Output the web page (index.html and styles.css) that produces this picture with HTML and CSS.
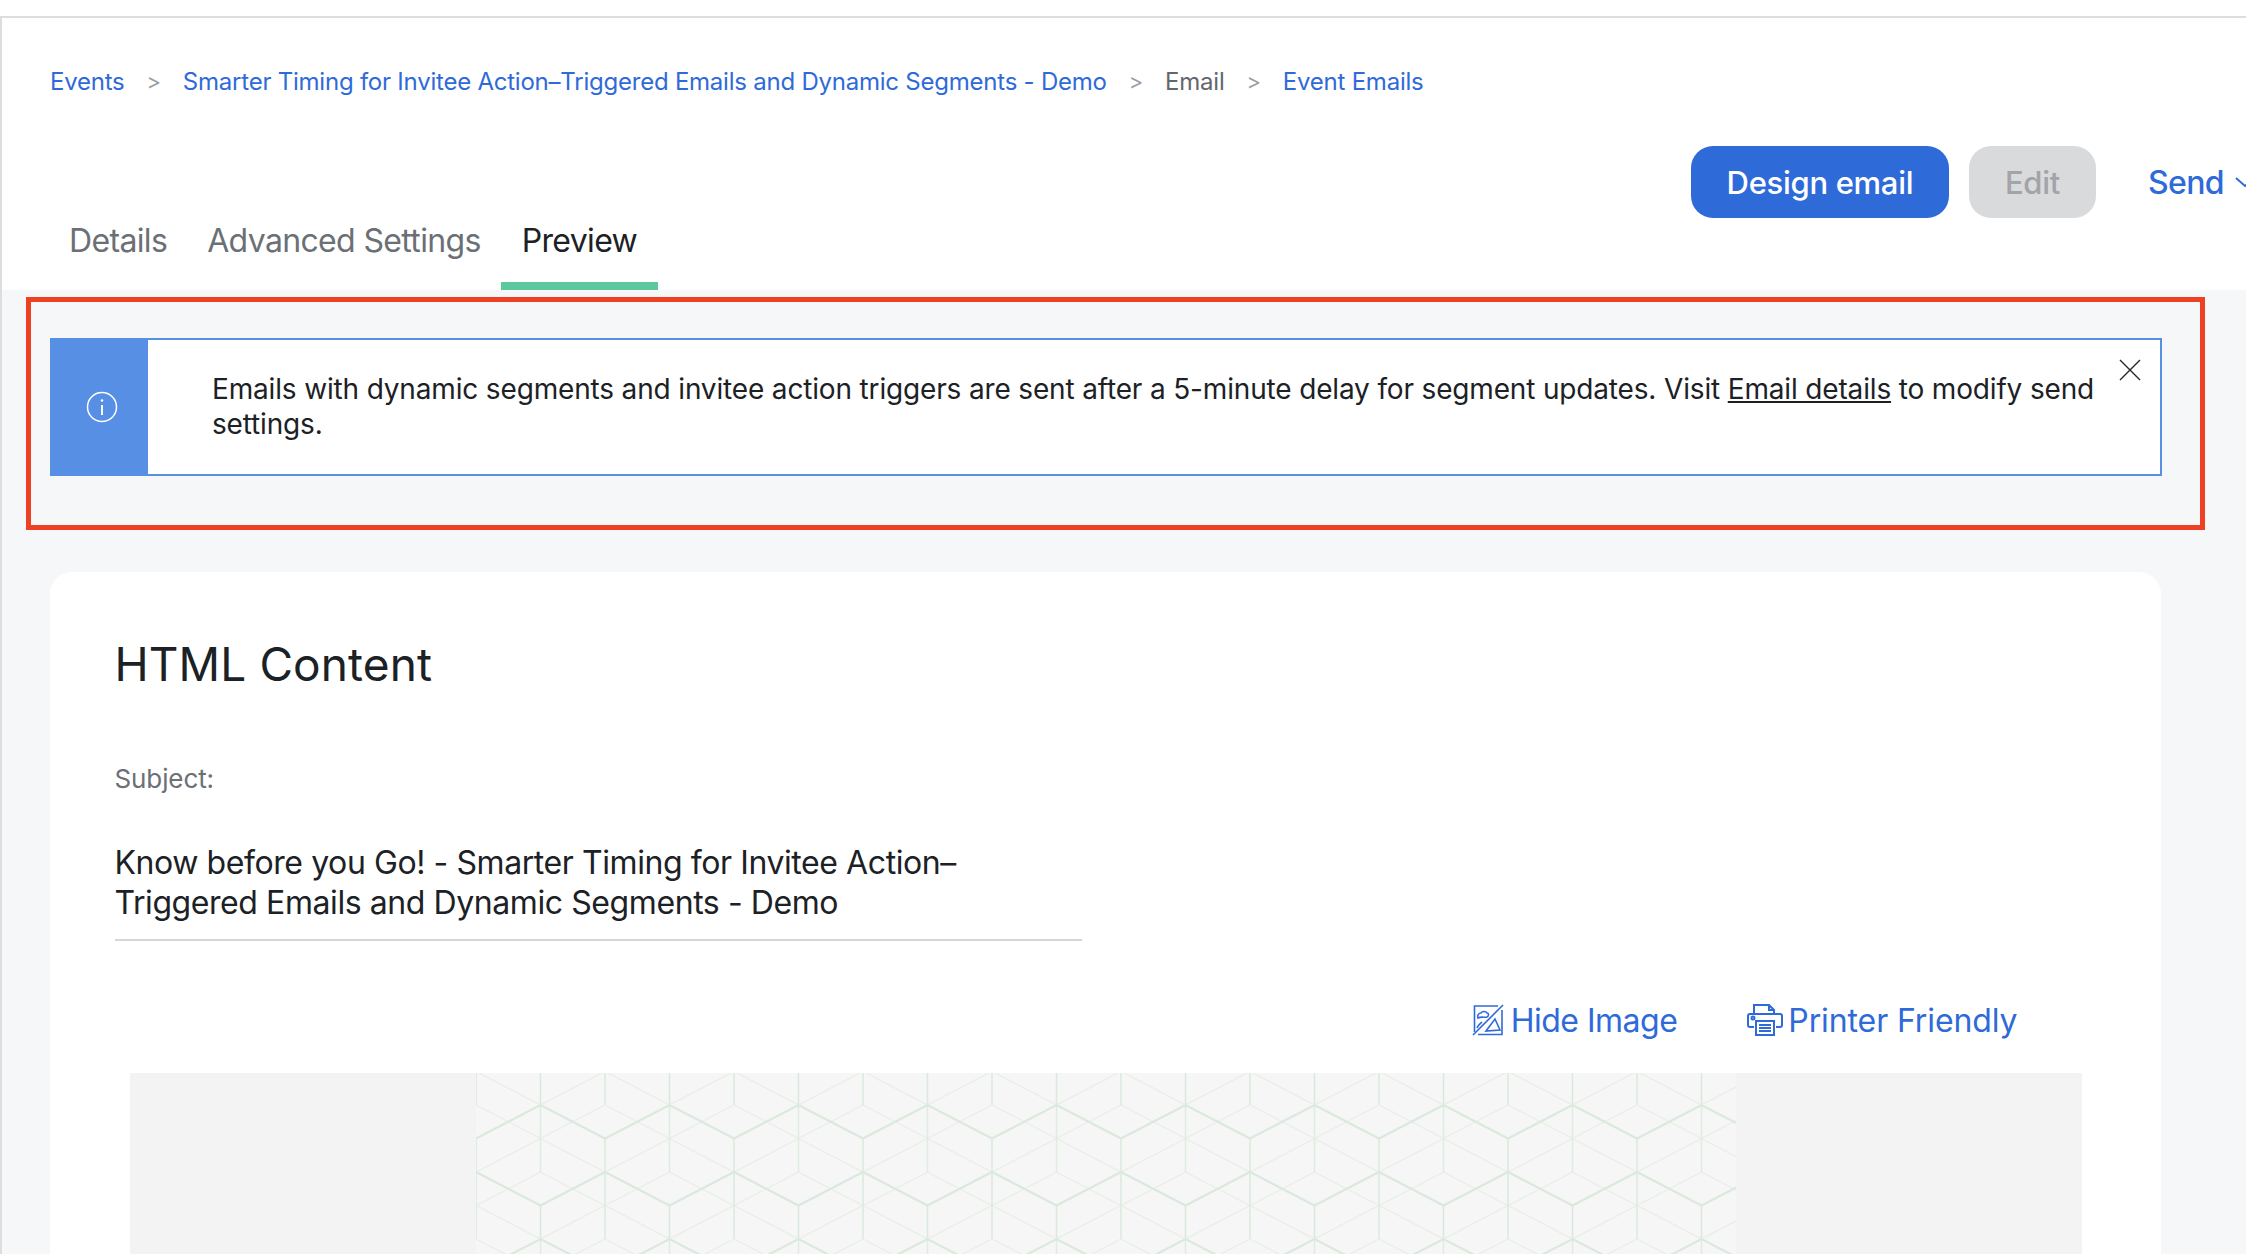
FILE: index.html
```html
<!DOCTYPE html>
<html lang="en">
<head>
  <meta charset="UTF-8" />
  <title>Event Emails - Preview</title>
  <meta name="viewport" content="width=device-width, initial-scale=1" />
  <link rel="stylesheet" href="styles.css">
</head>
<body>
  <div class="page">
    <header class="top">
      <nav class="crumbs">
        <a href="#">Events</a>
        <span class="sep">&gt;</span>
        <a href="#">Smarter Timing for Invitee Action–Triggered Emails and Dynamic Segments - Demo</a>
        <span class="sep">&gt;</span>
        <span class="crumb-plain">Email</span>
        <span class="sep">&gt;</span>
        <a href="#">Event Emails</a>
      </nav>
      <div class="toolbar">
        <div class="tabs">
          <a class="tab" href="#">Details</a>
          <a class="tab" href="#">Advanced Settings</a>
          <a class="tab active" href="#">Preview</a>
        </div>
        <div class="actions">
          <button class="btn primary">Design email</button>
          <button class="btn disabled">Edit</button>
          <a class="send" href="#">Send
            <svg class="chev" width="22" height="12" viewBox="0 0 22 12"><path d="M2 2l9 8 9-8" fill="none" stroke="#2f6ad9" stroke-width="2"/></svg>
          </a>
        </div>
      </div>
    </header>

    <main class="content">
      <div class="highlight">
        <section class="notice">
          <div class="notice-icon">
            <svg width="32" height="32" viewBox="0 0 32 32" fill="none" stroke="#fff">
              <circle cx="16" cy="16" r="14.5" stroke-width="1.5"/>
              <path d="M16 14v10" stroke-width="2"/>
              <circle cx="16" cy="9.5" r="1.3" fill="#fff" stroke="none"/>
            </svg>
          </div>
          <p class="notice-text">Emails with dynamic segments and invitee action triggers are sent after a 5-minute delay for segment updates. Visit <a href="#">Email details</a> to modify send settings.</p>
          <svg class="notice-close" width="24" height="24" viewBox="0 0 24 24"><path d="M2 2l20 20M22 2L2 22" stroke="#22272c" stroke-width="1.4" fill="none"/></svg>
        </section>
      </div>

      <section class="card">
        <h2>HTML Content</h2>
        <div class="label">Subject:</div>
        <div class="subject">Know before you Go! - Smarter Timing for Invitee Action–Triggered Emails and Dynamic Segments - Demo</div>
        <div class="links">
          <a class="hide-link" href="#">
            <svg width="32" height="32" viewBox="0 0 32 32" fill="none" stroke="#2f6ad9" stroke-width="1.6">
              <path d="M26 2H2.5v26M30 6v24.5H6"/>
              <path d="M1 31L31 1"/>
              <path d="M6 14c-1-3 1-5 3-5 1-2 5-2 6 0 2 0 2 3 0 4-3 1-5-1-9 1z"/>
              <path d="M5 24c1-3 3-4 5-6M14 27l9-12 5 11z"/>
            </svg>
            Hide Image
          </a>
          <a class="print-link" href="#">
            <svg class="printer" width="36" height="34" viewBox="0 0 36 34" fill="none" stroke="#2f6ad9" stroke-width="2">
              <path d="M7 11V2h15l5 5v4"/>
              <path d="M22 2v5h5"/>
              <path d="M7 24H3a2 2 0 0 1-2-2V13a2 2 0 0 1 2-2h30a2 2 0 0 1 2 2v9a2 2 0 0 1-2 2h-4"/>
              <circle cx="6" cy="15" r="1.5"/>
              <path d="M9 18h18v14H9zM12 22h12M12 25h12M12 28h12"/>
            </svg>
            Printer Friendly
          </a>
        </div>
        <div class="email-frame">
          <svg class="email-bg" width="1260" height="181">
            <defs>
              <pattern id="cubes" x="0" y="32" width="129" height="134" patternUnits="userSpaceOnUse">
                <g fill="none" stroke="#eaefea" stroke-width="1.5">
                  <path d="M0 0L64.5 33.5L129 0M0 67L64.5 33.5L129 67M0 100.5L64.5 67L129 100.5M0 100.5L64.5 134L129 100.5"/>
                  <path d="M64.5 0V67" stroke="#dfece0"/>
                </g>
                <g fill="none" stroke="#dae9db" stroke-width="1.5">
                  <path d="M64.5 100.5V134M0 33.5V134M129 33.5V134"/>
                </g>
                <g fill="none" stroke="#dae9db" stroke-width="2">
                  <path d="M0 33.5L64.5 0L129 33.5M0 67L64.5 100.5L129 67"/>
                </g>
              </pattern>
            </defs>
            <rect width="1260" height="181" fill="#f5f6f5"/>
            <rect width="1260" height="181" fill="url(#cubes)"/>
          </svg>
        </div>
      </section>
    </main>
  </div>
</body>
</html>
```

FILE: styles.css
```css
html, body { margin: 0; height: 1254px; overflow: hidden; background: #fff; }
body { font-family: Inter, "Noto Sans", sans-serif; color: #1c2126; }
a { color: #2f6ad9; text-decoration: none; }

.page { margin-top: 16px; border-top: 2px solid #dddddd; border-left: 2px solid #dddddd; width: 2300px; height: 1236px; background: #f6f7f9; }

.top { background: #fff; height: 272px; box-sizing: border-box; padding: 51px 0 0 48px; display: flex; flex-direction: column; }
.crumbs { display: flex; align-items: center; height: 24px; font-size: 24px; letter-spacing: -0.23px; }
.sep { color: #9a9da2; margin: 0 22px; font-size: 22px; }
.crumb-plain { color: #63676c; }

.toolbar { display: flex; justify-content: space-between; align-items: flex-end; width: 2206px; margin-top: auto; }
.tabs { display: flex; }
.tab { color: #6b7076; font-size: 32px; letter-spacing: -0.65px; padding: 0 20px; height: 68px; line-height: 38px; box-sizing: border-box; }
.tab:first-child { margin-left: -1px; }
.tab.active { color: #1c2126; border-bottom: 8px solid #5cc8a0; padding: 0 21px; }

.actions { display: flex; align-items: center; gap: 20px; margin-bottom: 72px; flex-shrink: 0; }
.btn { font-family: inherit; font-size: 31px; font-weight: 500; letter-spacing: -0.3px; height: 72px; border: none; border-radius: 22px; padding: 0; }
.btn.primary { background: #2f6ad9; color: #fff; width: 258px; }
.btn.disabled { background: #d9dadc; color: #a2a4a8; width: 127px; }
.send { font-size: 32px; font-weight: 500; letter-spacing: -0.6px; margin-left: 32px; display: flex; align-items: center; gap: 10px; }

.content { padding-top: 7px; }
.highlight { margin-left: 24px; width: 2179px; height: 233px; box-sizing: border-box; border: 5px solid #ee4023; padding: 36px 38px 0 19px; }
.notice { position: relative; display: flex; height: 138px; box-sizing: border-box; border: 2px solid #5790e3; background: #fff; }
.notice-icon { width: 98px; flex-shrink: 0; box-sizing: border-box; padding-left: 6px; margin: -2px 0 -2px -2px; background: #568fe3; display: flex; align-items: center; justify-content: center; }
.notice-text { margin: 0; padding: 32px 40px 0 64px; font-size: 28px; line-height: 34.5px; letter-spacing: -0.16px; color: #1c2126; }
.notice-text a { color: inherit; text-decoration: underline; }
.notice-close { position: absolute; top: 18px; right: 18px; }

.card { margin: 42px 0 0 48px; width: 2111px; height: 700px; box-sizing: border-box; background: #fff; border-radius: 22px; padding: 64px 0 0 64.5px; }
.card h2 { margin: 0; font-size: 46px; font-weight: 400; line-height: 56px; letter-spacing: 0.1px; }
.label { margin-top: 72px; font-size: 26px; letter-spacing: -0.1px; line-height: 30px; color: #6b7076; }
.subject { margin-top: 49px; width: 967px; box-sizing: border-box; padding-bottom: 16px; border-bottom: 2px solid #d6d6d6; font-size: 32px; letter-spacing: -0.42px; line-height: 40px; }
.links { display: flex; justify-content: flex-end; gap: 70px; width: 1903px; margin-top: 59px; height: 40px; }
.links a { display: flex; align-items: center; gap: 7px; font-size: 32px; }
.links .hide-link { letter-spacing: -0.5px; }
.links .print-link { letter-spacing: -0.1px; }
.printer { margin-right: -2px; }
.email-frame { margin: 33px 0 0 15.5px; width: 1952px; height: 181px; padding-left: 346px; box-sizing: border-box; background: #f3f3f3; }
.email-bg { display: block; }
```
